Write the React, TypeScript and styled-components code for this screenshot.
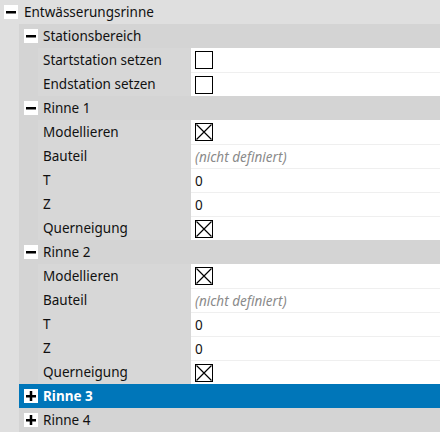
import React from "react"
import styled, { createGlobalStyle } from "styled-components"

const GlobalStyle = createGlobalStyle`
  html, body {
    margin: 0;
    padding: 0;
    background: #dfdfdf;
  }
  body {
    font-family: "Noto Sans", "Liberation Sans", sans-serif;
    font-size: 13.5px;
    color: #111;
  }
`

const Tree = styled.div`
  width: 440px;
  height: 432px;
  overflow: hidden;
  background: #dfdfdf;
`

const RootRow = styled.div`
  display: flex;
  align-items: center;
  height: 24px;
  padding-left: 4px;
  gap: 6px;
`

const Children = styled.div`
  padding-left: 19px;
`

const GroupRow = styled.div<{ $selected?: boolean }>`
  display: flex;
  align-items: center;
  height: 24px;
  padding-left: 5px;
  gap: 5px;
  background: ${(p) => (p.$selected ? "#0076b9" : "#d4d4d4")};
  color: ${(p) => (p.$selected ? "#fff" : "#111")};
  font-weight: ${(p) => (p.$selected ? 700 : 400)};
`

const Props = styled.div`
  padding-left: 19px;
  background: #d4d4d4;
`

const PropRow = styled.div`
  display: grid;
  grid-template-columns: 153px 1fr;
  height: 24px;
`

const Label = styled.div`
  display: flex;
  align-items: center;
  padding-left: 5px;
  background: #d7d7d7;
  white-space: nowrap;
`

const Value = styled.div<{ $first?: boolean }>`
  display: flex;
  align-items: center;
  padding-left: 4px;
  background: #fff;
  border-top: ${(p) => (p.$first ? "none" : "1px solid #efefef")};
  box-sizing: border-box;
`

const Placeholder = styled.span`
  font-style: italic;
  color: #8a8a8a;
`

const Expander = styled.span`
  width: 14px;
  height: 14px;
  background: #fff;
  display: inline-flex;
  align-items: center;
  justify-content: center;
  flex: none;
`

const Check = styled.span`
  width: 18px;
  height: 18px;
  box-sizing: border-box;
  border: 1px solid #000;
  background: #fff;
  display: inline-flex;
`

const Toggle = ({ open }: { open: boolean }) => (
  <Expander>
    <svg width="10" height="10" viewBox="0 0 10 10">
      <rect x="0" y="4" width="10" height="2.5" fill="#000" />
      {!open && <rect x="3.75" y="0" width="2.5" height="10" fill="#000" />}
    </svg>
  </Expander>
)

const CheckBox = ({ checked }: { checked: boolean }) => (
  <Check>
    {checked && (
      <svg width="16" height="16" viewBox="0 0 16 16">
        <path d="M0.5 0.5 L15.5 15.5 M15.5 0.5 L0.5 15.5" stroke="#000" strokeWidth="1.2" />
      </svg>
    )}
  </Check>
)

type Prop = { label: string; value: React.ReactNode }

const rinneProps: Prop[] = [
  { label: "Modellieren", value: <CheckBox checked /> },
  { label: "Bauteil", value: <Placeholder>(nicht definiert)</Placeholder> },
  { label: "T", value: "0" },
  { label: "Z", value: "0" },
  { label: "Querneigung", value: <CheckBox checked /> },
]

const groups: { title: string; open: boolean; selected?: boolean; props: Prop[] }[] = [
  {
    title: "Stationsbereich",
    open: true,
    props: [
      { label: "Startstation setzen", value: <CheckBox checked={false} /> },
      { label: "Endstation setzen", value: <CheckBox checked={false} /> },
    ],
  },
  { title: "Rinne 1", open: true, props: rinneProps },
  { title: "Rinne 2", open: true, props: rinneProps },
  { title: "Rinne 3", open: false, selected: true, props: [] },
  { title: "Rinne 4", open: false, props: [] },
]

export default function App() {
  return (
    <>
      <GlobalStyle />
      <Tree>
        <RootRow>
          <Toggle open />
          <span>Entwässerungsrinne</span>
        </RootRow>
        <Children>
          {groups.map((g) => (
            <div key={g.title}>
              <GroupRow $selected={g.selected}>
                <Toggle open={g.open} />
                <span>{g.title}</span>
              </GroupRow>
              {g.open && (
                <Props>
                  {g.props.map((p, i) => (
                    <PropRow key={p.label}>
                      <Label>{p.label}</Label>
                      <Value $first={i === 0}>{p.value}</Value>
                    </PropRow>
                  ))}
                </Props>
              )}
            </div>
          ))}
        </Children>
      </Tree>
    </>
  )
}
